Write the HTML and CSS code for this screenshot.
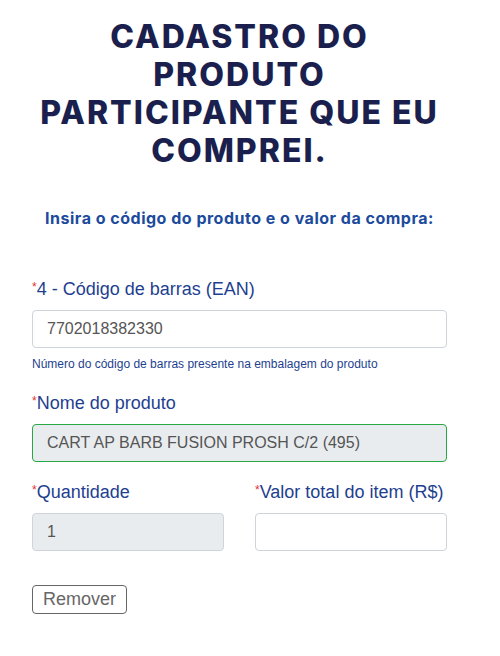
FILE: index.html
```html
<!DOCTYPE html>
<html lang="pt-BR">
<head>
  <meta charset="UTF-8" />
  <meta name="viewport" content="width=device-width, initial-scale=1.0"/>
  <title>Cadastro do produto</title>
  <link rel="stylesheet" href="styles.css">
</head>
<body>
  <div class="container">
    <h1 class="title">CADASTRO DO<br>PRODUTO<br>PARTICIPANTE QUE EU<br>COMPREI.</h1>
    <p class="subtitle">Insira o código do produto e o valor da compra:</p>

    <div class="field">
      <label class="label"><span class="req">*</span>4 - Código de barras (EAN)</label>
      <input class="input" type="text" value="7702018382330" />
      <small class="help">Número do código de barras presente na embalagem do produto</small>
    </div>

    <div class="field">
      <label class="label"><span class="req">*</span>Nome do produto</label>
      <input class="input valid" type="text" value="CART AP BARB FUSION PROSH C/2 (495)" readonly />
    </div>

    <div class="row">
      <div class="field">
        <label class="label"><span class="req">*</span>Quantidade</label>
        <input class="input" type="text" value="1" readonly />
      </div>
      <div class="field">
        <label class="label"><span class="req">*</span>Valor total do item (R$)</label>
        <input class="input" type="text" value="" />
      </div>
    </div>

    <button class="remove">Remover</button>
  </div>
</body>
</html>
```

FILE: styles.css
```css
body {
  font-family: 'Liberation Sans', Arial, sans-serif;
  margin: 0;
  padding: 0;
  background-color: #ffffff;
}

.container {
  width: 415px;
  margin-left: 32px;
  padding-top: 18px;
}

.title {
  font-family: 'Inter', sans-serif;
  font-weight: 800;
  font-size: 32px;
  line-height: 38px;
  letter-spacing: 2px;
  color: #1b1f4e;
  text-align: center;
  white-space: nowrap;
  margin: 0;
}

.subtitle {
  font-family: 'Inter', sans-serif;
  font-weight: 700;
  font-size: 16px;
  letter-spacing: 0.5px;
  color: #1c4a9c;
  text-align: center;
  margin: 38px 0 51px;
}

.field {
  display: flex;
  flex-direction: column;
  min-width: 0;
  margin-bottom: 20px;
}

.label {
  font-size: 18px;
  color: #1e3f8f;
  margin-bottom: 10px;
}

.req {
  color: #e03131;
  font-size: 12px;
  vertical-align: top;
  line-height: 16px;
}

.input {
  width: 100%;
  height: 38px;
  box-sizing: border-box;
  border: 1px solid #ced4da;
  border-radius: 4px;
  padding: 0 14px;
  font-family: 'Liberation Sans', Arial, sans-serif;
  font-size: 16px;
  color: #555;
  background: #fff;
}

.input[readonly] {
  background: #e9ecef;
}

.input.valid {
  border-color: #28a745;
}

.help {
  font-size: 12px;
  color: #1e3f8f;
  margin-top: 9px;
  margin-bottom: 2px;
}

.row {
  display: grid;
  grid-template-columns: 1fr 1fr;
  gap: 31px;
}

.remove {
  margin-top: 14px;
  font-family: 'Liberation Sans', Arial, sans-serif;
  font-size: 18px;
  color: #666;
  background: #fff;
  border: 1px solid #666;
  border-radius: 4px;
  padding: 3px 10px;
}
```
